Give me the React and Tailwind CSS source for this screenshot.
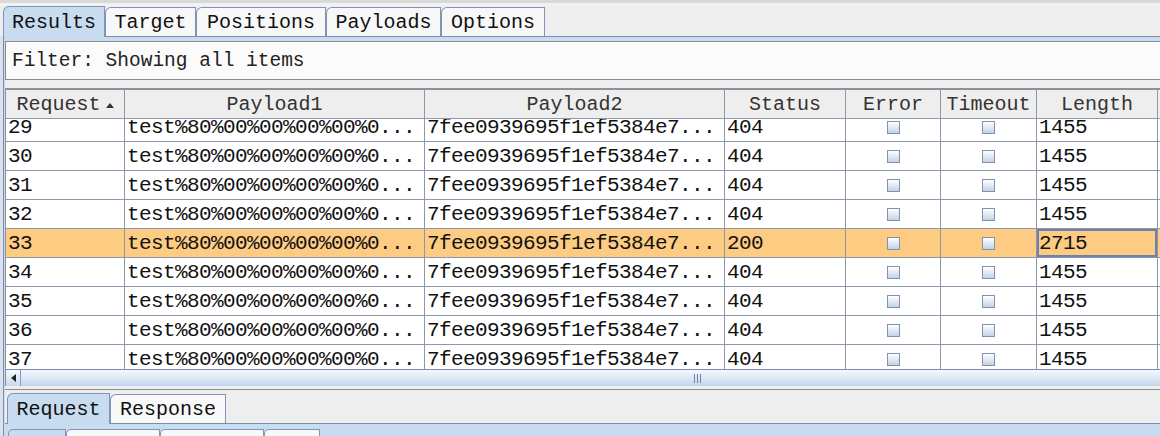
import React from 'react';

const topTabs = [
  { label: 'Results', w: 'w-[102px]', active: true },
  { label: 'Target', w: 'w-[91px]' },
  { label: 'Positions', w: 'w-[130px]' },
  { label: 'Payloads', w: 'w-[115px]' },
  { label: 'Options', w: 'w-[104px]' },
];

const cols = [
  { key: 'req', label: 'Request', w: 'w-[119px]', sort: true },
  { key: 'p1', label: 'Payload1', w: 'w-[300px]' },
  { key: 'p2', label: 'Payload2', w: 'w-[300px]' },
  { key: 'status', label: 'Status', w: 'w-[121px]' },
  { key: 'error', label: 'Error', w: 'w-[95px]', check: true },
  { key: 'timeout', label: 'Timeout', w: 'w-[96px]', check: true },
  { key: 'len', label: 'Length', w: 'w-[121px]' },
];

const rows = [29, 30, 31, 32, 33, 34, 35, 36, 37].map(n => ({
  req: String(n),
  p1: 'test%80%00%00%00%00%0...',
  p2: '7fee0939695f1ef5384e7...',
  status: n === 33 ? '200' : '404',
  len: n === 33 ? '2715' : '1455',
  selected: n === 33,
}));

const Checkbox = () => (
  <div className="w-[13px] h-[13px] border border-[#8491ab] bg-linear-to-b from-white to-[#c3d3e8]" />
);

const Tab = ({ label, w, active }) => (
  <div
    className={`${w} shrink-0 flex items-center justify-center pt-px border border-b-0 border-[#8393b8] rounded-tl-[6px] ${
      active ? 'h-[31px] -mb-px bg-[#c8dcf0] relative z-10' : 'h-[29px] bg-[#f8f8f8]'
    }`}
  >
    {label}
  </div>
);

export default function App() {
  return (
    <div className="w-[1160px] h-[436px] overflow-hidden bg-[#eeeeee] text-[20px] leading-none text-[#111] font-['Liberation_Mono',monospace] flex flex-col">
      <div className="h-[3px] bg-[#d9d9d9] shrink-0" />
      <div className="h-[3px] bg-[#f2f2f2] shrink-0" />

      {/* top tabs */}
      <div className="flex items-end h-[30px] pl-[3px] shrink-0">
        {topTabs.map(t => <Tab key={t.label} {...t} />)}
      </div>

      <div className="flex flex-1 min-h-0">
        <div className="w-[3px] bg-[#dde2ea] shrink-0" />
        <div className="flex-1 min-w-0 flex flex-col border-l border-t border-[#7c8cb4] bg-[#c8dcf0] pt-[4px] pl-px">
          <div className="flex-1 min-h-0 flex flex-col bg-[#eeeeee]">
            {/* filter */}
            <div className="h-[39px] shrink-0 border border-r-0 border-[#8c8c8c] bg-[#fbfbfb] flex items-center pl-[6px] pt-[3px] text-[19.5px] text-[#222]">
              Filter: Showing all items
            </div>

            {/* table */}
            <div className="mt-[8px] border-t-2 border-l border-[#8a929e] bg-white shrink-0">
              <div className="flex h-[29px] border-b border-[#8a97ad] bg-[#eeeeee] text-[#333]">
                {cols.map(c => (
                  <div key={c.key} className={`${c.w} shrink-0 flex items-center justify-center gap-[5px] pt-[2px] border-r border-[#8a97ad]`}>
                    {c.label}
                    {c.sort && (
                      <svg width="8" height="5" viewBox="0 0 8 5"><path d="M0 5 L4 0 L8 5 Z" fill="#333" /></svg>
                    )}
                  </div>
                ))}
                <div className="flex-1" />
              </div>

              <div className="h-[250px] overflow-hidden">
                <div className="-mt-[6px]">
                  {rows.map(r => (
                    <div
                      key={r.req}
                      className={`flex h-[29px] border-b border-[#8a97ad] text-[21px] tracking-[-0.6px] ${r.selected ? 'bg-[#fecb82]' : 'bg-white'}`}
                    >
                      {cols.map(c => (
                        <div
                          key={c.key}
                          className={`${c.w} shrink-0 flex items-center border-r border-[#8a97ad] ${
                            c.check ? 'justify-center' : 'pl-[2px]'
                          } ${r.selected && c.key === 'len' ? 'shadow-[inset_0_0_0_2px_#6e7fa9]' : ''}`}
                        >
                          {c.check ? <Checkbox /> : r[c.key]}
                        </div>
                      ))}
                      <div className="flex-1" />
                    </div>
                  ))}
                </div>
              </div>

              {/* horizontal scrollbar */}
              <div className="flex h-[17px] border-t border-[#7c8cb4] bg-[#dfe8f4]">
                <div className="w-[15px] shrink-0 flex items-center justify-center border-r border-[#8a9abd] bg-linear-to-b from-[#f6f9fd] to-[#c9d9ee]">
                  <svg width="5" height="8" viewBox="0 0 5 8"><path d="M5 0 L0 4 L5 8 Z" fill="#222" /></svg>
                </div>
                <div className="flex-1 flex items-center pl-[673px] bg-linear-to-b from-[#f4f8fd] via-[#dde8f5] to-[#c3d4eb]">
                  <div className="flex gap-[2px] h-[9px]">
                    <div className="w-px bg-[#6f80a8]" />
                    <div className="w-px bg-[#6f80a8]" />
                    <div className="w-px bg-[#6f80a8]" />
                  </div>
                </div>
              </div>
            </div>

            <div className="h-[3px] shrink-0" />
            <div className="h-px bg-[#8c8c8c] shrink-0" />

            {/* request / response tabs */}
            <div className="flex items-end h-[33px] pl-[2px] shrink-0">
              <Tab label="Request" w="w-[103px]" active />
              <Tab label="Response" w="w-[116px]" />
            </div>
            <div className="flex-1 border-t border-[#7c8cb4] bg-[#c8dcf0] flex items-end pl-[3px]">
              <div className="flex items-end h-[7px]">
                <div className="w-[58px] h-full border border-b-0 border-[#8393b8] rounded-tl-[5px] bg-[#c8dcf0]" />
                <div className="w-[94px] h-full border border-b-0 border-[#8393b8] rounded-tl-[5px] bg-[#f8f8f8]" />
                <div className="w-[104px] h-full border border-b-0 border-[#8393b8] rounded-tl-[5px] bg-[#f8f8f8]" />
                <div className="w-[56px] h-full border border-b-0 border-[#8393b8] rounded-tl-[5px] bg-[#f8f8f8]" />
              </div>
            </div>
          </div>
        </div>
      </div>
    </div>
  );
}
